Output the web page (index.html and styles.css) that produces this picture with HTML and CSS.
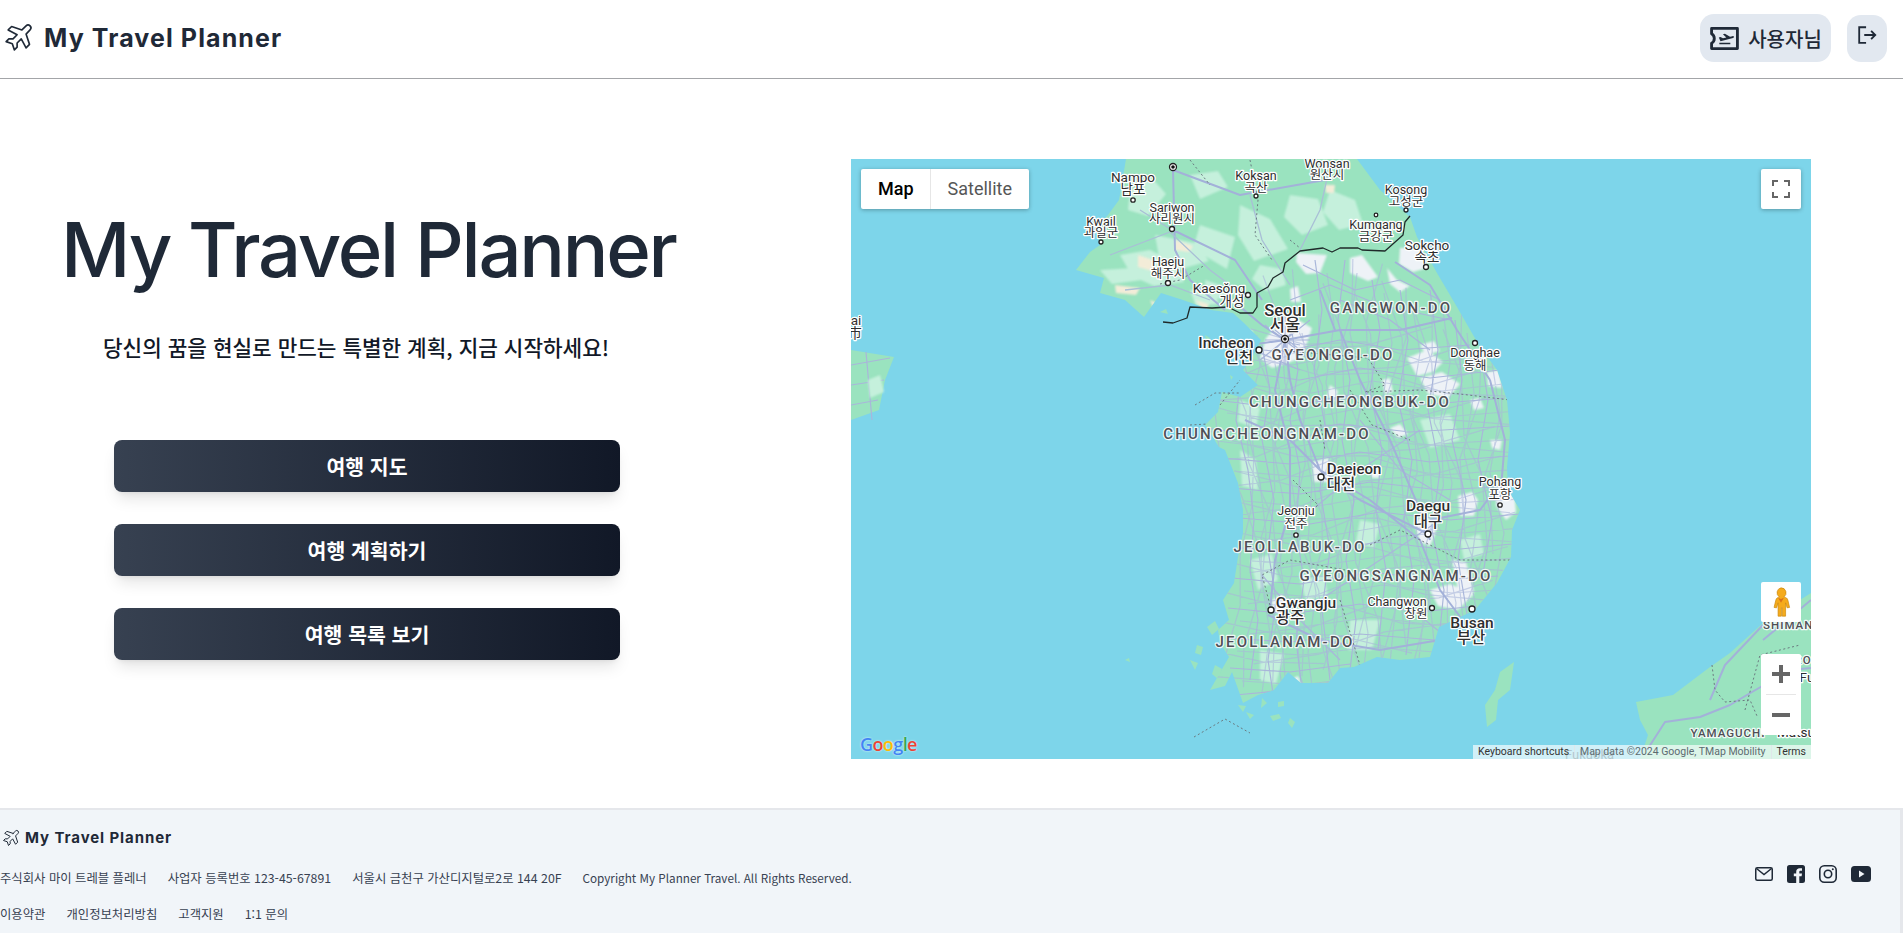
FILE: index.html
```html
<!DOCTYPE html>
<html lang="ko">
<head>
<meta charset="utf-8">
<title>My Travel Planner</title>
<link rel="stylesheet" href="styles.css">
</head>
<body>
<header class="top">
  <a class="brand">
    <svg class="plane" viewBox="0 0 24 24"><path d="M14.5 6.5l3 -2.9a2.05 2.05 0 0 1 2.9 2.9l-2.9 3l2.5 7.5l-2.5 2.55l-3.5 -6.55l-3 3v3l-2 2l-1.5 -4.5l-4.5 -1.5l2 -2h3l3 -3l-6.5 -3.5l2.5 -2.5l7.5 2.5z"/></svg>
    <span class="brand-name">My Travel Planner</span>
  </a>
  <div class="actions">
    <button class="user-btn">
      <svg class="ticket" viewBox="0 0 24 24"><path class="ticket-line" d="M2 4.200h20v15.600H2v-4.200c1.300-.7 2.100-2 2.100-3.600s-.8-2.900-2.100-3.600z"/><path class="ticket-fill" d="M7.600 11.200l1.300-.4 1.900 1.100 2.600-.7-2.600-2.500 1.500-.4 4 2.400 1.900-.5c1.200-.3 1.600 1.200.4 1.500L8.900 14.200zM8 15.200h8.500v1.200H8z"/></svg>
      <span>사용자님</span>
    </button>
    <button class="logout-btn" aria-label="로그아웃">
      <svg class="logout" viewBox="0 0 24 24"><path d="M11 3.500H3.500v17H11M9 12h12M16.500 7.500 21 12l-4.500 4.500"/></svg>
    </button>
  </div>
</header>

<main class="hero">
  <section class="intro">
    <h1 class="title">My Travel Planner</h1>
    <p class="tagline">당신의 꿈을 현실로 만드는 특별한 계획, 지금 시작하세요!</p>
    <nav class="menu">
      <a class="menu-btn">여행 지도</a>
      <a class="menu-btn">여행 계획하기</a>
      <a class="menu-btn">여행 목록 보기</a>
    </nav>
  </section>

  <div class="map">
    <svg class="map-art" viewBox="851 159 960 600">
      <defs>
        <path id="land" d="M1126 159L1122 183L1119 200L1108 215L1096 228L1100 245L1090 252L1076 270L1104 278L1100 293L1125 300L1144 317L1161 293L1183 300L1211 310L1233 313L1244 323L1261 340L1251 360L1243 370L1258 385L1240 397L1222 392L1218 412L1205 425L1219 447L1225 450L1238 483L1243 510L1243 533L1238 557L1234 583L1223 600L1229 620L1218 630L1220 643L1229 657L1210 690L1225 686L1232 672L1243 703L1258 695L1274 690L1288 672L1301 683L1328 683L1340 668L1354 667L1377 657L1400 660L1430 657L1439 627L1475 610L1497 583L1511 557L1512 530L1520 510L1508 490L1507 467L1510 433L1507 400L1497 370L1480 347L1457 307L1437 273L1417 237L1410 217L1380 190L1357 159Z"/>
        <clipPath id="land-clip"><use href="#land"/></clipPath>
        <path id="thin" class="road-thin" d="M1232 350L1240 380L1236 420L1248 470L1254 520L1250 570L1258 620L1250 680M1262 345L1270 390L1262 440L1274 500L1268 550L1276 600L1268 660L1274 700M1290 320L1298 370L1290 420L1300 470L1296 530L1304 580L1296 640L1302 690M1315 260L1322 310L1314 370L1326 430L1320 490L1330 550L1322 610L1330 680M1345 260L1338 320L1350 380L1342 440L1354 500L1346 560L1356 620L1350 670M1372 280L1380 330L1370 390L1382 450L1376 510L1386 570L1378 650M1400 290L1408 340L1398 400L1412 460L1404 520L1414 580L1406 655M1430 290L1438 350L1428 410L1440 470L1432 530L1444 590L1438 650M1455 320L1462 380L1452 440L1466 500L1458 560L1468 620M1480 350L1488 400L1478 460L1492 520L1482 580M1225 345L1280 352L1340 340L1400 350L1470 345M1240 372L1300 380L1360 368L1430 378L1500 370M1215 400L1280 408L1350 395L1420 405L1505 398M1205 428L1270 436L1340 424L1410 432L1510 426M1222 458L1290 464L1360 452L1430 462L1510 456M1232 488L1300 494L1370 482L1440 490L1510 486M1240 518L1310 524L1380 512L1450 520L1520 514M1240 548L1310 552L1380 542L1450 550L1512 544M1232 578L1300 584L1370 572L1440 580L1498 576M1228 608L1290 614L1360 604L1420 612L1476 606M1225 638L1290 642L1360 634L1435 640M1230 668L1290 672L1350 664M1235 695L1290 690"/>
      </defs>
      <rect class="sea" x="851" y="159" width="960" height="600"/>
      <path class="land" d="M851 350L894 357L885 380L879 410L851 420Z"/>
      <path class="road-thin" d="M851 365L890 358M851 385L884 380M851 405L878 400M866 352L872 420"/>
      <path class="pale soft" d="M880 375L884 392L870 398L868 380Z"/>
      <path class="land" d="M1514 662L1510 690L1498 700L1496 720L1487 727L1485 705L1495 690L1500 672Z"/>
      <path class="land" d="M1636 702L1673 695L1710 667L1730 653L1763 623L1811 593V759H1640L1648 735L1640 720Z"/>
      <path class="road-main" d="M1647 750L1665 722L1700 717L1730 705L1752 692L1790 670L1811 668M1710 700L1725 665L1763 625M1763 640L1811 600"/>
      <path class="dash" d="M1712 665L1715 690L1725 702L1750 700L1757 716M1745 710L1760 655L1800 645"/>
      <use href="#land" class="land"/>
      <path class="islands" d="M1207 627l8-6 4 8-7 6zM1197 645l6 2-2 8-6-2zM1190 660l8 3-3 7zM1215 665l7 4-4 10-6-5zM1238 705l8 1-3 6zM1246 712l8 3-4 4zM1262 698l5 5-6 5zM1278 702l6-1 0 5-6 1zM1270 716l9-2 2 4-8 3zM1290 718l5 4-3 6-4-5zM1143 234l-10 10 6 5zM1130 290l8 1-1 7-8-1zM1160 312l6-3 2 5zM1205 335l5 3-3 6zM1230 375l3 2-2 3zM1125 660l4-2 1 4z"/>
      <g clip-path="url(#land-clip)">
        <path class="pale soft" d="M1120 255l30-5 20 10 14 22-30 4-22-10zM1155 235l40 8 14 18-28 8-22-12zM1200 225l35 12-8 32-34-20zM1240 205l30 14 18 30-34 12-16-26zM1290 195l28 4 10 26-26 10-18-18zM1330 190l25 10 8 24-24 6-16-18zM1260 265l22 4 4 16-20 6-14-12zM1205 280l18 6 4 14-20-4zM1130 190l22-12 14 16-18 22-20-6zM1190 175l28-4 10 16-28 12zM1100 270l34-2 8 12-30 4zM1190 290l26 0 2 14-22 2zM1240 400l20 8-4 20-18-6zM1240 450l16 10 2 30-16-4zM1250 560l22-6 6 26-20 10zM1260 650l24 4-8 30-16-4zM1350 620l30 0-8 30-24 0zM1420 420l30-6 10 26-30 8zM1360 520l20 4-6 24-18-6zM1460 540l20-6 4 20-20 6zM1300 580l24-4 4 20-22 4z"/>
        <path class="sand soft" d="M1138 255l18 6-4 10-14-4zM1175 240l18 6-4 6-14-2zM1115 285l25 3-4 7-20-2zM1195 300l14 4-4 8zM1325 185l10 0-1 8-8 0zM1150 300l14 6-8 8z"/>
        <path class="urban soft" d="M1297 253l30 2-7 18-14 1-10-12zM1350 258l12-3 16 22-10 4-18-8zM1387 268l10 12 13 6-10 6-10-8zM1290 289l8-3 3 16-10 0zM1407 358l20-8 16 12-10 10-16 4zM1420 378l22-6 18 12-12 14-20-4zM1487 372l12-2 3 18-14-2zM1382 380l8-2 3 14-8 2zM1390 428l10-4 8 10-10 4zM1470 400l10-2 4 10-10 2zM1490 440l12 0-2 10-8-2zM1330 385l8 6-3 10-8-5zM1400 248l22 0 5 20-14 4-14-8zM1458 496l14-4 6 8-4 16-14 0zM1496 484l18 6 2 22-10 8-10-14zM1452 560l14 2 8 30-14 8zM1414 522l12-8 10 18-6 14-10-4zM1430 590l20-6 24 10-16 16-20-4zM1272 600l10-6 4 10-8 10-6-4zM1312 462l16-4 6 12-4 12-16 0zM1290 680l8-4 4 10zM1266 338l22-24 24 14-10 30-30 10-12-10zM1232 330l20 0 4 20-18 2zM1420 345l14-4 6 10-14 4zM1370 470l8-2 2 10-8 0zM1450 630l10-4 4 10-10 2z"/>
        <use href="#thin"/>
        <g class="faint">
          <use href="#thin" transform="translate(12 13)"/>
          <use href="#thin" transform="rotate(9 1340 500)"/>
          <use href="#thin" transform="rotate(-12 1330 480) translate(-8 6)"/>
        </g>
        <path class="road-thin" d="M1303 265L1355 290L1400 280L1440 300M1290 300L1330 285L1380 305L1450 320M1340 300L1390 320L1430 350M1360 420L1400 470L1450 500M1300 520L1360 470L1420 430M1320 600L1380 560L1440 520M1262 575L1300 620L1340 660M1400 600L1450 640M1275 340L1300 345M1275 330L1300 350M1295 330L1272 352M1285 315V365M1265 340H1310M1265 325L1310 360M1310 320L1260 360M1258 352L1300 370"/>
        <path class="road-main" d="M1285 340L1290 380L1300 420L1320 470L1370 500L1420 540L1440 590L1470 630M1285 340L1275 390L1290 450L1290 510L1275 560L1270 610M1285 340L1340 330L1400 330L1452 318M1340 330L1360 380L1390 440L1420 510L1430 540M1268 615L1320 640L1380 650L1440 640L1485 640M1430 520L1480 510L1495 490M1320 475L1360 500L1430 535M1250 345L1285 340M1245 420L1290 440L1325 475M1225 310L1190 280L1175 250L1173 170M1173 230L1235 260L1262 300M1173 170L1240 195L1325 180M1395 262L1430 285L1457 330L1490 380M1490 380L1505 440L1500 500M1320 290L1335 330M1232 300L1262 325L1285 340"/>
        <path class="road-north" d="M1110 255L1170 232L1210 270L1250 300M1140 210L1172 230M1250 195L1262 240L1290 285M1330 165L1320 210L1300 250M1125 290L1170 285L1210 300"/>
        <path class="dash" d="M1250 160L1258 200L1255 235L1272 260M1190 160L1210 185M1160 284L1180 280L1205 265M1290 240L1300 248M1275 350L1368 358L1385 385L1365 392L1420 390L1460 394L1510 400M1350 390L1372 425L1410 440M1320 420L1325 450M1293 480L1318 505L1290 530M1270 605L1262 575L1290 560L1345 570M1370 545L1400 530L1460 560L1512 560M1340 600L1360 665"/>
      </g>
      <path class="dash" d="M1194 737L1225 719L1250 733M1195 405L1215 393L1240 393M1220 405L1240 380M1190 425L1208 424"/>
      <path class="border" d="M1410 216L1405 222L1403 235L1385 251L1362 250L1358 248L1340 248L1332 252L1323 248L1300 251L1285 263L1283 272L1273 278L1268 287L1257 293L1257 307L1253 313L1240 313L1228 307L1212 308L1190 307L1187 318L1173 323L1163 322"/>

      <g class="cities">
        <text class="c13" x="1133" y="182">Nampo</text><text class="c13" x="1133" y="194">남포</text>
        <text class="c12" x="1256" y="180">Koksan</text><text class="c12" x="1256" y="192">곡산</text>
        <text class="c12" x="1327" y="168">Wonsan</text><text class="c12" x="1327" y="179">원산시</text>
        <text class="c12" x="1172" y="212">Sariwon</text><text class="c12" x="1172" y="223">사리원시</text>
        <text class="c12" x="1101" y="226">Kwail</text><text class="c12" x="1101" y="237">과일군</text>
        <text class="c12" x="1168" y="266">Haeju</text><text class="c12" x="1168" y="278">해주시</text>
        <text class="c13" x="1219" y="293">Kaesŏng</text><text class="c13" x="1232" y="306">개성</text>
        <text class="c16" x="1285" y="316">Seoul</text><text class="c16" x="1285" y="331">서울</text>
        <text class="c15" x="1226" y="348">Incheon</text><text class="c15" x="1239" y="363">인천</text>
        <text class="c12" x="1406" y="194">Kosong</text><text class="c12" x="1406" y="206">고성군</text>
        <text class="c12" x="1376" y="229">Kumgang</text><text class="c12" x="1376" y="241">금강군</text>
        <text class="c13" x="1427" y="250">Sokcho</text><text class="c13" x="1427" y="262">속초</text>
        <text class="c12" x="1475" y="357">Donghae</text><text class="c12" x="1475" y="370">동해</text>
        <text class="c14" x="1354" y="474">Daejeon</text><text class="c15" x="1341" y="490">대전</text>
        <text class="c12" x="1500" y="486">Pohang</text><text class="c12" x="1500" y="499">포항</text>
        <text class="c15" x="1428" y="511">Daegu</text><text class="c15" x="1428" y="527">대구</text>
        <text class="c12" x="1296" y="515">Jeonju</text><text class="c12" x="1296" y="528">전주</text>
        <text class="c15" x="1306" y="608">Gwangju</text><text class="c15" x="1290" y="623">광주</text>
        <text class="c12" x="1397" y="606">Changwon</text><text class="c12" x="1416" y="618">창원</text>
        <text class="c15" x="1472" y="628">Busan</text><text class="c15" x="1471" y="643">부산</text>
        <text class="c13" x="856" y="325">ai</text><text class="c13" x="855" y="338">市</text>
      </g>
      <g class="regions">
        <text x="1391" y="313">GANGWON-DO</text>
        <text x="1333" y="360">GYEONGGI-DO</text>
        <text x="1350" y="407">CHUNGCHEONGBUK-DO</text>
        <text x="1267" y="439">CHUNGCHEONGNAM-DO</text>
        <text x="1300" y="552">JEOLLABUK-DO</text>
        <text x="1396" y="581">GYEONGSANGNAM-DO</text>
        <text x="1285" y="647">JEOLLANAM-DO</text>
        <text class="small" x="1728" y="737">YAMAGUCHI</text>
        <text class="small" x="1792" y="629">SHIMANE</text>
        <text class="small" x="1803" y="664">RO</text>
      </g>
      <g class="cities">
        <text class="c13" x="1807" y="682">Fu</text>
        <text class="c13" x="1796" y="737">Matsu</text>
      </g>
      <g class="dots">
        <circle cx="1133" cy="200" r="2.200"/><circle cx="1256" cy="196" r="2"/><circle cx="1172" cy="229" r="2.500"/><circle cx="1101" cy="242" r="2"/><circle cx="1168" cy="283" r="2.500"/><circle cx="1248" cy="295" r="2.500"/><circle cx="1259" cy="350" r="3"/><circle cx="1406" cy="210" r="2"/><circle cx="1376" cy="215" r="1.800"/><circle cx="1426" cy="267" r="2.500"/><circle cx="1475" cy="343" r="2.500"/><circle cx="1321" cy="477" r="3"/><circle cx="1500" cy="505" r="2.200"/><circle cx="1428" cy="534" r="3"/><circle cx="1296" cy="535" r="2.200"/><circle cx="1271" cy="610" r="3"/><circle cx="1432" cy="608" r="2.500"/><circle cx="1472" cy="609" r="3"/>
        <circle cx="1285" cy="339" r="3.500"/><circle class="core" cx="1285" cy="339" r="1.800"/>
        <circle cx="1173" cy="167" r="3.500"/><circle class="core" cx="1173" cy="167" r="1.800"/>
      </g>
    </svg>

    <div class="map-types">
      <span class="map-type active">Map</span>
      <span class="map-type">Satellite</span>
    </div>
    <button class="map-ctrl fullscreen" aria-label="Fullscreen">
      <svg viewBox="0 0 18 18"><path d="M1 6V1h5M12 1h5v5M17 12v5h-5M6 17H1v-5"/></svg>
    </button>
    <button class="map-ctrl pegman" aria-label="Street View">
      <svg viewBox="0 0 24 36"><path class="peg-body" d="M12 1a6 6 0 0 1 3.500 10.900c2.500.6 4.300 1.500 4.800 4.100l2 8.500-3 .5-1.800-6V35h-4V25h-1v10h-4V19l-1.800 6-3-.5 2-8.500c.5-2.600 2.300-3.500 4.300-4.100A6 6 0 0 1 12 1z"/><path class="peg-neck" d="M8.500 13l3.500 6 3.500-6-3.500 1.500z"/></svg>
    </button>
    <div class="zoom-ctrl">
      <button class="zoom-btn" aria-label="Zoom in"><svg viewBox="0 0 18 18"><path d="M0 7h7V0h4v7h7v4h-7v7H7v-7H0z"/></svg></button>
      <span class="zoom-sep"></span>
      <button class="zoom-btn" aria-label="Zoom out"><svg viewBox="0 0 18 18"><path d="M0 7h18v4H0z"/></svg></button>
    </div>
    <div class="google"><span class="g-b">G</span><span class="g-r">o</span><span class="g-y">o</span><span class="g-b">g</span><span class="g-g">l</span><span class="g-r">e</span></div>
    <div class="attribution">
      <span class="ghost">Fukuoka</span>
      <span class="attr-dark">Keyboard shortcuts</span>
      <span class="attr-sep"></span>
      <span>Map data ©2024 Google, TMap Mobility</span>
      <span class="attr-sep"></span>
      <span class="attr-dark">Terms</span>
    </div>
  </div>
</main>

<footer class="foot">
  <div class="foot-left">
    <a class="foot-brand">
      <svg class="plane small" viewBox="0 0 24 24"><path d="M14.5 6.5l3 -2.9a2.05 2.05 0 0 1 2.9 2.9l-2.9 3l2.5 7.5l-2.5 2.55l-3.5 -6.55l-3 3v3l-2 2l-1.5 -4.5l-4.5 -1.5l2 -2h3l3 -3l-6.5 -3.5l2.5 -2.5l7.5 2.5z"/></svg>
      <span>My Travel Planner</span>
    </a>
    <ul class="foot-row">
      <li>주식회사 마이 트레블 플레너</li>
      <li>사업자 등록번호 123-45-67891</li>
      <li>서울시 금천구 가산디지털로2로 144 20F</li>
      <li class="copyright">Copyright My Planner Travel. All Rights Reserved.</li>
    </ul>
    <ul class="foot-row">
      <li>이용약관</li>
      <li>개인정보처리방침</li>
      <li>고객지원</li>
      <li>1:1 문의</li>
    </ul>
  </div>
  <div class="socials">
    <svg class="mail" viewBox="0 0 18 14"><rect x=".75" y=".75" width="16.500" height="12.500" rx="1.500"/><path d="M1.500 1.500 9 7.500l7.500-6"/></svg>
    <svg class="solid" viewBox="0 0 18 18"><path d="M2.500 0h13A2.500 2.500 0 0 1 18 2.500v13a2.500 2.500 0 0 1-2.500 2.500H12.300v-6.700h2.300l.4-2.700h-2.700V7c0-.8.300-1.300 1.400-1.300H15V3.300c-.3 0-1.200-.1-2.200-.1-2.200 0-3.600 1.300-3.600 3.700v1.700H6.800v2.700h2.400V18H2.500A2.500 2.500 0 0 1 0 15.500v-13A2.500 2.500 0 0 1 2.500 0z"/></svg>
    <svg class="insta" viewBox="0 0 18 18"><rect x=".8" y=".8" width="16.400" height="16.400" rx="4.500"/><circle cx="9" cy="9" r="3.700"/><circle class="insta-dot" cx="13.800" cy="4.200" r="1"/></svg>
    <svg class="solid yt" viewBox="0 0 20 16"><path d="M3.500 0h13A3.500 3.500 0 0 1 20 3.500v9a3.500 3.500 0 0 1-3.500 3.500h-13A3.500 3.500 0 0 1 0 12.500v-9A3.500 3.500 0 0 1 3.500 0zM8 4.500v7L13.500 8z" fill-rule="evenodd"/></svg>
  </div>
</footer>
</body>
</html>
```

FILE: styles.css
```css
* { box-sizing: border-box; }
html, body { margin: 0; padding: 0; }
body {
  background: #fff;
  color: #1f2937;
  font-family: "Noto Sans CJK KR", "Noto Sans", sans-serif;
  overflow: hidden;
}
button { border: 0; padding: 0; font: inherit; color: inherit; cursor: pointer; }

.top {
  height: 79px;
  display: flex;
  align-items: center;
  justify-content: space-between;
  padding: 0 16px 2px 2px;
  border-bottom: 1px solid #a3a5a8;
}
.brand { display: flex; align-items: center; gap: 9px; margin-top: -1px; }
.plane { width: 33px; height: 33px; fill: none; stroke: #1f2937; stroke-width: 1.200; stroke-linejoin: round; stroke-linecap: round; }
.plane.small { width: 20px; height: 20px; }
.brand-name {
  font-family: Inter, "Liberation Sans", sans-serif;
  font-size: 25px;
  font-weight: 700;
  letter-spacing: 1.100px;
  color: #1f2937;
}
.actions { display: flex; align-items: center; gap: 16px; }
.user-btn {
  width: 131px;
  height: 48px;
  border-radius: 14px;
  background: #e2e8f0;
  display: flex;
  align-items: center;
  justify-content: center;
  gap: 8px;
  font-size: 20px;
  font-weight: 500;
  color: #1f2937;
}
.ticket { width: 31px; height: 31px; flex: none; }
.ticket-line { fill: none; stroke: #1f2937; stroke-width: 2.200; stroke-linejoin: round; }
.ticket-fill { fill: #1f2937; }
.logout-btn {
  width: 40px;
  height: 47px;
  border-radius: 14px;
  background: #e2e8f0;
  display: flex;
  align-items: center;
  justify-content: center;
}
.logout { width: 22px; height: 22px; fill: none; stroke: #1f2937; stroke-width: 2; margin-bottom: 6px; }

.hero {
  display: flex;
  padding: 80px 92px 49px 0;
  height: 729px;
}
.intro { width: 851px; flex: none; display: flex; flex-direction: column; }
.title {
  margin: 45px 0 0;
  padding-left: 61px;
  font-family: Inter, "Liberation Sans", sans-serif;
  font-size: 76px;
  line-height: 90px;
  font-weight: 500;
  letter-spacing: -2.250px;
  color: #1f2937;
  white-space: nowrap;
}
.tagline {
  margin: 38px 0 0;
  padding-left: 103px;
  font-size: 21.300px;
  line-height: 30px;
  font-weight: 500;
  color: #111827;
}
.menu { display: flex; flex-direction: column; gap: 32px; margin: 78px 0 0 114px; width: 506px; }
.menu-btn {
  height: 52px;
  border-radius: 8px;
  background: linear-gradient(to right, #374151, #111827);
  box-shadow: 0 10px 15px -3px rgba(0, 0, 0, .1), 0 4px 6px -4px rgba(0, 0, 0, .1);
  color: #fff;
  font-size: 20.500px;
  font-weight: 700;
  display: flex;
  align-items: center;
  justify-content: center;
}

.map { position: relative; width: 960px; height: 600px; flex: none; overflow: hidden; }
.map-art { display: block; width: 960px; height: 600px; }
.sea { fill: #7dd5ea; }
.land { fill: #9ae3bf; }
.islands { fill: #9ae3bf; }
.pale { fill: #c5f0dc; }
.sand { fill: #f3ecd8; }
.urban { fill: #eef2f7; }
.soft { filter: blur(1px); }
.faint { opacity: .6; }
.road-thin { fill: none; stroke: #a9b6da; stroke-width: 1.200; stroke-linejoin: round; }
.road-main { fill: none; stroke: #a3b1d9; stroke-width: 2; stroke-linejoin: round; }
.road-north { fill: none; stroke: #a9bfd6; stroke-width: 1.300; }
.dash { fill: none; stroke: #6b7a80; stroke-width: 1; stroke-dasharray: 2 2.500; }
.border { fill: none; stroke: #1f2a2a; stroke-width: 1.300; stroke-linejoin: round; }

.cities text {
  font-family: Roboto, "Noto Sans CJK KR", sans-serif;
  fill: #2e2e2e;
  text-anchor: middle;
  paint-order: stroke;
  stroke: #fff;
  stroke-width: 2.500px;
  stroke-linejoin: round;
}
.cities .c12 { font-size: 12.500px; }
.cities .c13 { font-size: 13.500px; }
.cities .c14 { font-size: 15px; font-weight: 500; }
.cities .c15 { font-size: 15.500px; font-weight: 500; }
.cities .c16 { font-size: 16.500px; font-weight: 500; }
.regions text {
  font-family: Roboto, sans-serif;
  font-size: 15px;
  font-weight: 500;
  letter-spacing: 2.200px;
  fill: #4f4f55;
  text-anchor: middle;
  paint-order: stroke;
  stroke: #fff;
  stroke-opacity: .85;
  stroke-width: 2.500px;
  stroke-linejoin: round;
}
.regions .small { font-size: 11.500px; letter-spacing: 1px; }
.dots circle { fill: #fff; stroke: #222; stroke-width: 1.300; }
.dots .core { fill: #111; stroke: none; }

.map-types {
  position: absolute;
  left: 10px;
  top: 10px;
  height: 40px;
  display: flex;
  background: #fff;
  border-radius: 2px;
  box-shadow: 0 1px 4px rgba(0, 0, 0, .3);
  font-family: Roboto, sans-serif;
  font-size: 18px;
  color: #565656;
}
.map-type { padding: 0 17px 0 16.500px; line-height: 40px; }
.map-type.active { color: #000; font-weight: 500; border-right: 1px solid #e6e6e6; padding: 0 16.500px 0 17px; }
.map-ctrl {
  position: absolute;
  left: 910px;
  width: 40px;
  height: 40px;
  background: #fff;
  border-radius: 2px;
  display: flex;
  align-items: center;
  justify-content: center;
}
.fullscreen { top: 10px; box-shadow: 0 1px 4px rgba(0, 0, 0, .3); }
.fullscreen svg { width: 18px; height: 18px; fill: none; stroke: #666; stroke-width: 2; }
.pegman { top: 423px; }
.pegman svg { width: 20px; height: 30px; }
.peg-body { fill: #f5ab1c; stroke: #c8860c; stroke-width: .8; }
.peg-neck { fill: #d9731a; }
.zoom-ctrl {
  position: absolute;
  left: 910px;
  top: 495px;
  width: 40px;
  height: 81px;
  background: #fff;
  border-radius: 2px;
  display: flex;
  flex-direction: column;
  align-items: center;
}
.zoom-btn { width: 40px; height: 40px; background: none; display: flex; align-items: center; justify-content: center; }
.zoom-btn svg { width: 18px; height: 18px; fill: #666; }
.zoom-sep { width: 30px; height: 1px; background: #e6e6e6; flex: none; }
.google {
  position: absolute;
  left: 9px;
  top: 573px;
  font-family: "Open Sans", "Liberation Sans", sans-serif;
  font-size: 18px;
  line-height: 24px;
  font-weight: 600;
  letter-spacing: -.6px;
  text-shadow: 0 0 2px rgba(255, 255, 255, .9);
}
.g-b { color: #4285f4; }
.g-r { color: #ea4335; }
.g-y { color: #fbbc05; }
.g-g { color: #34a853; }
.attribution {
  position: absolute;
  right: 0;
  bottom: 0;
  width: 338px;
  height: 14px;
  padding: 0 5px;
  display: flex;
  align-items: center;
  justify-content: space-between;
  background: rgba(255, 255, 255, .65);
  font-family: Roboto, sans-serif;
  font-size: 10.500px;
  line-height: 14px;
  color: #5c6b70;
  white-space: nowrap;
}
.attr-dark { color: #333; }
.attr-sep { width: 1px; height: 14px; background: #dfe8ea; }
.ghost {
  position: absolute;
  left: 92px;
  top: 3px;
  font-size: 13px;
  color: rgba(120, 120, 120, .35);
}

.foot {
  height: 125px;
  display: flex;
  align-items: center;
  justify-content: space-between;
  background: #f1f5f9;
  border-top: 2px solid #e5e7eb;
  border-right: 3px solid #e5e7eb;
  padding: 7px 29px 0 0;
}
.foot-left { display: flex; flex-direction: column; }
.foot-brand {
  display: flex;
  align-items: center;
  gap: 4px;
  padding-left: 1px;
  height: 20px;
  font-family: Inter, "Liberation Sans", sans-serif;
  font-size: 15px;
  font-weight: 700;
  letter-spacing: .9px;
  color: #1f2937;
}
.foot-row {
  list-style: none;
  margin: 21px 0 0;
  padding: 0;
  display: flex;
  gap: 21px;
  font-size: 12.350px;
  line-height: 18px;
  color: #374151;
}
.foot-row + .foot-row { margin-top: 18px; }
.copyright { font-size: 11.700px; }
.socials { display: flex; align-items: center; gap: 14px; margin-bottom: 2px; }
.socials svg { display: block; }
.mail { width: 18px; height: 14px; fill: none; stroke: #1f2937; stroke-width: 1.500; }
.solid { width: 18px; height: 18px; fill: #1f2937; }
.solid.yt { width: 20px; height: 16px; }
.insta { width: 18px; height: 18px; fill: none; stroke: #1f2937; stroke-width: 1.600; }
.insta-dot { fill: #1f2937; stroke: none; }
```
